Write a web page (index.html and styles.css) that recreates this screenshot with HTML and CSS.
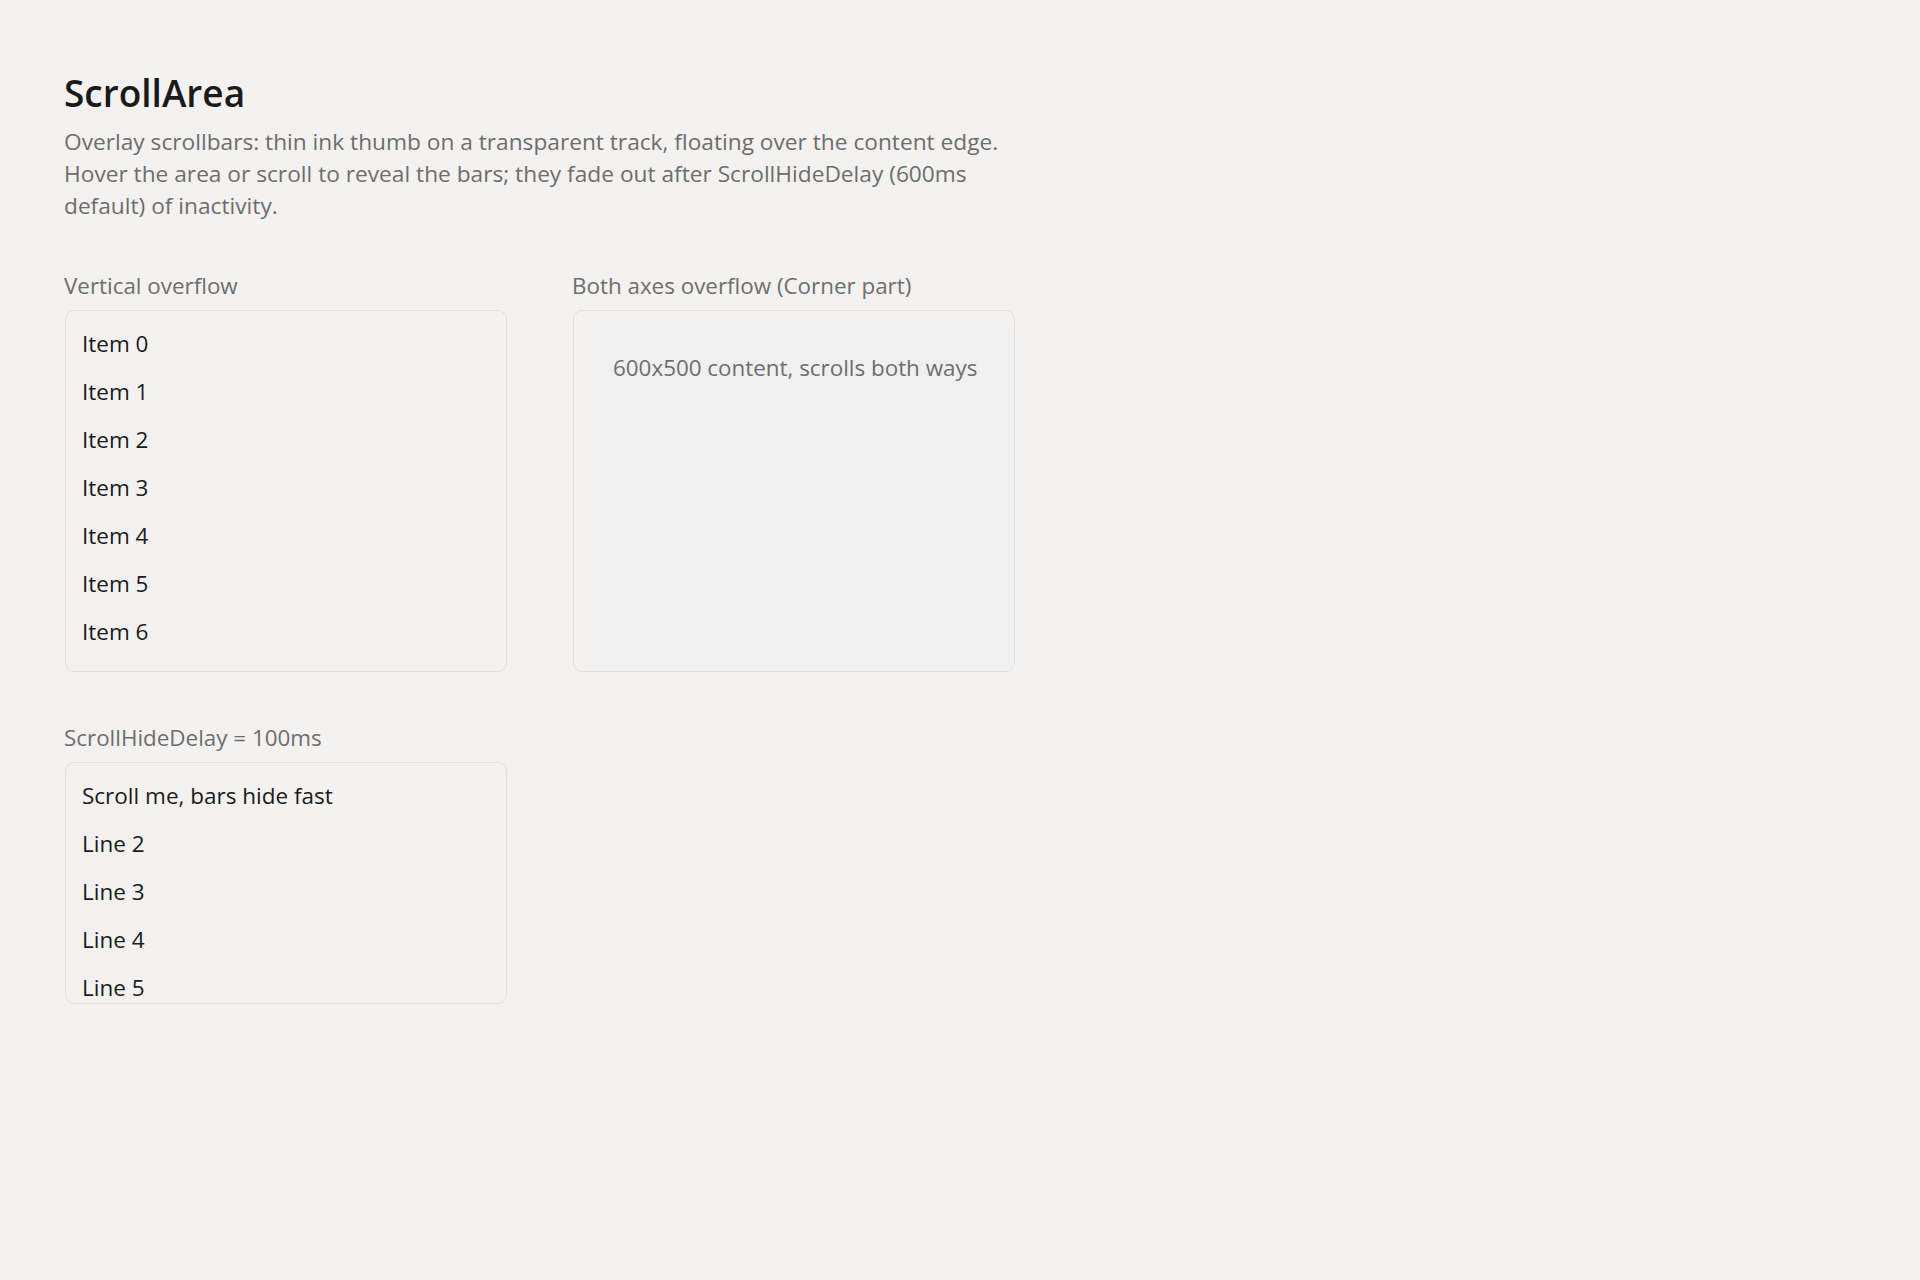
FILE: index.html
```html
<!DOCTYPE html>
<html lang="en">
<head>
<meta charset="utf-8">
<title>ScrollArea</title>
<link rel="stylesheet" href="styles.css">
</head>
<body>
<main class="page">
  <h1 class="title">ScrollArea</h1>
  <p class="desc">Overlay scrollbars: thin ink thumb on a transparent track, floating over the content edge. Hover the area or scroll to reveal the bars; they fade out after ScrollHideDelay (600ms default) of inactivity.</p>

  <section class="grid">
    <div class="demo">
      <div class="label">Vertical overflow</div>
      <div class="scroll scroll-tall">
        <div class="item">Item 0</div>
        <div class="item">Item 1</div>
        <div class="item">Item 2</div>
        <div class="item">Item 3</div>
        <div class="item">Item 4</div>
        <div class="item">Item 5</div>
        <div class="item">Item 6</div>
      </div>
    </div>

    <div class="demo">
      <div class="label">Both axes overflow (Corner part)</div>
      <div class="scroll scroll-tall scroll-both">
        <div class="canvas">600x500 content, scrolls both ways</div>
      </div>
    </div>

    <div class="demo">
      <div class="label">ScrollHideDelay = 100ms</div>
      <div class="scroll scroll-short">
        <div class="item">Scroll me, bars hide fast</div>
        <div class="item">Line 2</div>
        <div class="item">Line 3</div>
        <div class="item">Line 4</div>
        <div class="item">Line 5</div>
      </div>
    </div>
  </section>
</main>
</body>
</html>
```
FILE: styles.css
```css
html, body {
  margin: 0;
  padding: 0;
  background: #f3f2f0;
}

body {
  font-family: "Open Sans", "Noto Sans", sans-serif;
  color: #1b1b1b;
}

.page {
  padding: 69px 64px 0 64px;
}

.title {
  margin: 0;
  font-size: 37px;
  line-height: 48px;
  font-weight: 600;
  color: #1a1a1a;
}

.desc {
  margin: 9px 0 0 0;
  width: 950px;
  font-size: 22.7px;
  line-height: 32px;
  color: #6d6d6d;
}

.grid {
  margin-top: 48px;
  display: grid;
  grid-template-columns: 442px 442px;
  column-gap: 66px;
  row-gap: 50px;
  padding-left: 1px;
}

.demo {
  display: flex;
  flex-direction: column;
}

.label {
  font-size: 22.4px;
  line-height: 32px;
  color: #6e6e6e;
  margin-left: -1px;
}

.scroll {
  margin-top: 8px;
  box-sizing: border-box;
  border: 1px solid #e2e0de;
  border-radius: 9px;
  overflow: hidden;
  padding: 9px 16px 0 16px;
}

.scroll-tall {
  height: 362px;
}

.scroll-short {
  height: 242px;
}

.item {
  font-size: 22.5px;
  line-height: 48px;
  white-space: nowrap;
  color: #1b1b1b;
}

.scroll-both {
  padding: 16px 0 0 19px;
}

.canvas {
  flex: none;
  width: 600px;
  height: 500px;
  box-sizing: border-box;
  padding: 25px 20px 0 20px;
  background: #f0f0f0;
  font-size: 22.4px;
  line-height: 32px;
  color: #6e6e6e;
  white-space: nowrap;
}
```
